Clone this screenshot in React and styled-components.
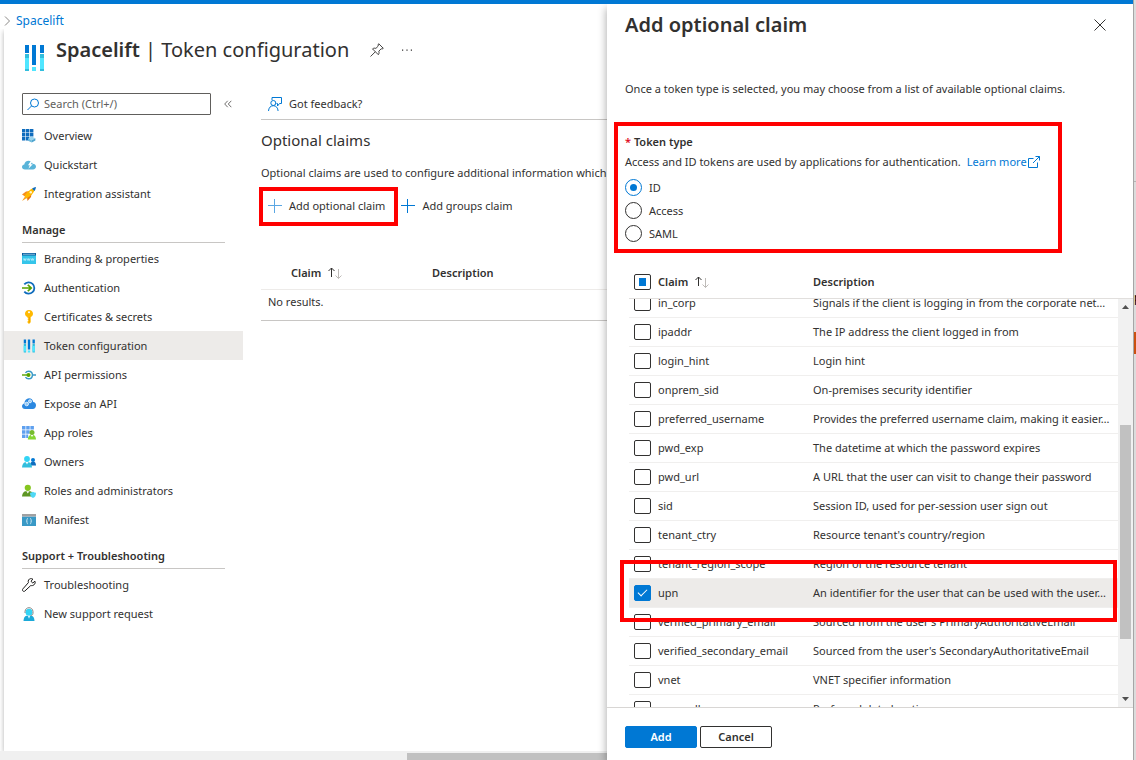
import React, { useLayoutEffect, useRef, useState } from "react";
import styled, { createGlobalStyle, css } from "styled-components";

const blue = "#0078d4";
const ink = "#323130";
const line = "#c8c6c4";
const faint = "#edebe9";
const alarm = "#ff0000";

const GlobalStyle = createGlobalStyle`
  *, *::before, *::after { box-sizing: border-box; }
  body {
    margin: 0;
    background: #fff;
    color: ${ink};
    font-family: "Noto Sans", "Open Sans", sans-serif;
    font-size: 11px;
    line-height: 16px;
    overflow: hidden;
  }
  h1, h2, h3, p, ul { margin: 0; padding: 0; }
  button, input { font: inherit; color: inherit; }
  a { color: ${blue}; text-decoration: none; }
  svg { display: block; flex: none; }
`;

const Desktop = styled.div`
  display: flex;
  height: 100vh;
`;

const Portal = styled.div`
  flex: 1;
  min-width: 0;
  display: flex;
  flex-direction: column;
`;

const TopBar = styled.div`
  height: 4px;
  flex: none;
  background: ${blue};
`;

const Stage = styled.div`
  flex: 1;
  min-height: 0;
  display: flex;
`;

const Main = styled.main`
  flex: 1;
  min-width: 0;
  display: flex;
  flex-direction: column;
  overflow: hidden;
`;

const Breadcrumb = styled.nav`
  height: 25px;
  flex: none;
  display: flex;
  align-items: center;
  gap: 6px;
  padding: 8px 0 0 4px;
  font-size: 12px;
`;

const Blade = styled.section`
  flex: 1;
  margin-left: 4px;
  background: #fff;
  box-shadow: 0 2px 5px rgba(0, 0, 0, 0.3);
  clip-path: inset(0 0 0 -4px);
`;

const BladeHeader = styled.header`
  display: flex;
  align-items: flex-start;
  gap: 10px;
  padding: 7px 18px 0;
  height: 64px;
`;

const BladeMark = styled.div`
  padding-top: 8px;
`;

const BladeTitle = styled.h1`
  font-size: 20px;
  line-height: 28px;
  font-weight: 400;
  white-space: nowrap;

  strong { font-weight: 600; }
`;

const TitleTools = styled.div`
  display: flex;
  align-items: center;
  gap: 16px;
  height: 28px;
  padding-left: 11px;
`;

const IconButton = styled.button`
  display: flex;
  align-items: center;
  justify-content: center;
  width: 14px;
  height: 14px;
  padding: 0;
  border: 0;
  background: none;
`;

const BladeBody = styled.div`
  display: flex;
`;

const Sidebar = styled.nav`
  width: 239px;
  flex: none;
`;

const SearchRow = styled.div`
  display: flex;
  align-items: center;
  gap: 10px;
  padding-left: 18px;
  margin-bottom: 6px;
`;

const SearchField = styled.label`
  display: flex;
  align-items: center;
  gap: 4px;
  width: 189px;
  height: 22px;
  padding: 0 4px;
  border: 1px solid #605e5c;
  border-radius: 1px;

  input {
    flex: 1;
    min-width: 0;
    padding: 0;
    border: 0;
    outline: 0;
    background: none;
  }
  input::placeholder { color: #605e5c; opacity: 1; }
`;

const MenuHeading = styled.h3`
  margin: 13px 18px 1px;
  padding-bottom: 3px;
  border-bottom: 1px solid ${line};
  font-size: 11px;
  line-height: 18px;
  font-weight: 600;
`;

const Menu = styled.ul`
  list-style: none;
`;

const MenuLink = styled.a`
  display: flex;
  align-items: center;
  gap: 8px;
  height: 29px;
  padding-left: 18px;
  color: ${ink};
  background: ${(p) => (p.$current ? faint : "transparent")};
`;

const Content = styled.div`
  flex: 1;
  min-width: 0;
  padding-left: 18px;
  white-space: nowrap;
`;

const CommandBar = styled.div`
  display: flex;
  height: 27px;
  padding-bottom: 4px;
  border-bottom: 1px solid ${line};
`;

const Command = styled.button`
  position: relative;
  display: flex;
  align-items: center;
  gap: 7px;
  padding: 0 7px;
  border: 0;
  background: none;
`;

const SectionTitle = styled.h2`
  padding-top: 10px;
  font-size: 15px;
  line-height: 20px;
  font-weight: 400;
`;

const Lead = styled.p`
  margin-top: 15px;
`;

const ClaimActions = styled.div`
  display: flex;
  gap: 2px;
  height: 32px;
  margin-top: 9px;
`;

const ButtonFrame = styled.span`
  position: absolute;
  inset: -3px -6px -4px -2px;
  border: 4px solid ${alarm};
  pointer-events: none;
`;

const SummaryTable = styled.table`
  width: 100%;
  margin-top: 34px;
  border-spacing: 0;
  table-layout: fixed;

  th {
    height: 34px;
    padding: 0 0 0 30px;
    border-bottom: 1px solid ${faint};
    text-align: left;
    font-weight: 600;
  }
  th:first-child { width: 171px; }
  th + th { padding-left: 0; }
  td {
    padding: 4px 7px 10px;
    border-bottom: 1px solid ${line};
  }
`;

const SortLabel = styled.span`
  display: flex;
  align-items: center;
  gap: 7px;
`;

const PageScroll = styled.div`
  height: 9px;
  flex: none;
  padding-top: 2px;
  background: #f0f0f0;
`;

const PageThumb = styled.div`
  width: 33%;
  height: 7px;
  margin-left: 67%;
  background: #c1c1c1;
`;

const Drawer = styled.aside`
  width: 526px;
  flex: none;
  display: flex;
  flex-direction: column;
  position: relative;
  background: #fff;
  box-shadow: -1px 4px 8px rgba(0, 0, 0, 0.3);
  clip-path: inset(0 0 0 -16px);
`;

const DrawerHeader = styled.header`
  display: flex;
  align-items: center;
  justify-content: space-between;
  padding: 7px 26px 0 18px;

  h2 {
    font-size: 20px;
    line-height: 28px;
    font-weight: 600;
  }
`;

const DrawerLead = styled.p`
  margin: 42px 18px 0;
`;

const TokenBox = styled.div`
  margin: 25px 71px 0 7px;
  padding: 8px 7px 4px;
  border: 4px solid ${alarm};

  fieldset {
    margin: 0;
    padding: 0;
    border: 0;
  }
  legend {
    padding: 0;
    font-weight: 600;
  }
`;

const Required = styled.span`
  color: #e00b1c;
`;

const Hint = styled.p`
  display: flex;
  align-items: center;
  margin: 4px 0 6px;

  a {
    display: flex;
    align-items: center;
    gap: 1px;
    margin-left: 6px;
  }
`;

const Choice = styled.label`
  display: flex;
  align-items: center;
  gap: 7px;
  height: 23px;
`;

const Radio = styled.input`
  appearance: none;
  display: flex;
  align-items: center;
  justify-content: center;
  width: 17px;
  height: 17px;
  margin: 0;
  border: 1px solid ${ink};
  border-radius: 50%;

  &:checked { border-color: ${blue}; }
  &:checked::after {
    content: "";
    width: 7px;
    height: 7px;
    border-radius: 50%;
    background: ${blue};
  }
`;

const ClaimArea = styled.div`
  flex: 1;
  min-height: 0;
  display: flex;
  margin-top: 13px;
`;

const ClaimScroller = styled.div`
  flex: 1;
  min-width: 0;
  padding-left: 22px;
  overflow-y: scroll;
  scrollbar-width: none;
`;

const ClaimTable = styled.table`
  width: 100%;
  border-spacing: 0;
  table-layout: fixed;
  white-space: nowrap;

  th, td {
    padding: 0;
    text-align: left;
  }
  th {
    position: sticky;
    top: 0;
    z-index: 1;
    height: 33px;
    background: #fff;
    border-bottom: 1px solid #e1dfdd;
    font-weight: 600;
  }
  td {
    height: 29px;
    border-bottom: 1px solid #f0efee;
  }
  th:first-child, td:first-child {
    width: 29px;
    padding-left: 5px;
  }
  th:nth-child(2) { width: 155px; }
`;

const ClaimRow = styled.tr`
  ${(p) =>
    p.$chosen &&
    css`
      position: relative;
      td { background: ${faint}; }
    `}
`;

const RowFrame = styled.span`
  position: absolute;
  inset: -19px 1px -14px -9px;
  border: 4px solid ${alarm};
  pointer-events: none;
`;

const Tick = styled.input`
  appearance: none;
  display: flex;
  align-items: center;
  justify-content: center;
  width: 17px;
  height: 16px;
  margin: 0;
  border: 1px solid ${ink};
  border-radius: 2px;
  background: #fff;

  &:indeterminate::after {
    content: "";
    width: 7px;
    height: 8px;
    background: ${blue};
  }
  &:checked {
    border-color: ${blue};
    background: ${blue};
  }
  &:checked::after {
    content: "";
    width: 9px;
    height: 5px;
    margin-bottom: 3px;
    border: solid #fff;
    border-width: 0 0 1px 1px;
    transform: rotate(-45deg);
  }
`;

const ScrollTrack = styled.div`
  display: flex;
  flex-direction: column;
  align-items: center;
  width: 15px;
  margin-top: 32px;
  padding: 6px 0;
  border-top: 1px solid #e1dfdd;
  background: #f1f1f1;
`;

const ScrollSpan = styled.div`
  flex: 1;
  display: flex;
  flex-direction: column;
  justify-content: flex-end;
  width: 11px;
  padding-bottom: 58px;
`;

const ScrollThumb = styled.div`
  height: 65%;
  background: #c1c1c1;
`;

const DrawerFooter = styled.footer`
  display: flex;
  gap: 3px;
  padding: 18px 18px 12px;
  border-top: 1px solid #d8d6d4;
`;

const ActionButton = styled.button`
  width: 72px;
  height: 22px;
  padding: 0;
  border: 1px solid ${(p) => (p.$primary ? blue : ink)};
  border-radius: 2px;
  background: ${(p) => (p.$primary ? blue : "#fff")};
  color: ${(p) => (p.$primary ? "#fff" : ink)};
  font-weight: 600;
  line-height: 18px;
`;

const Neighbour = styled.div`
  width: 3px;
  flex: none;
  overflow: hidden;
  padding-top: 181px;
  border-left: 1px solid #a6a6a6;
  background: #dcdcdc;
`;

const NeighbourPage = styled.div`
  height: 100%;
  padding-top: 108px;
  border-top: 1px solid #b4b4b4;
  color: #000;
  font-size: 12px;
  line-height: 16px;
`;

const NeighbourBadge = styled.div`
  height: 22px;
  margin-top: 26px;
  background: #ca5010;
`;

function TokenIcon({ width = 14, height = 14 }) {
  return (
    <svg width={width} height={height} viewBox="0 0 24 28" preserveAspectRatio="none" aria-hidden="true">
      <path fill={blue} d="M3 1h4v8H3zM10 1h4v20h-4zM18 1h4v8h-4z" />
      <path fill="#32bedd" d="M3 10h4v17H3zM18 10h4v17h-4z" />
      <path fill="#50e6ff" d="M3 14h4v11H3zM18 14h4v11h-4zM10 23h4v4h-4z" />
    </svg>
  );
}

function Drawing({ children, size = 14 }) {
  return (
    <svg width={size} height={size} viewBox="0 0 14 14" fill="none" aria-hidden="true">
      {children}
    </svg>
  );
}

const OverviewIcon = () => (
  <Drawing>
    <path fill="#0f6cbd" d="M0 0h3.4v3.4H0zM4 0h3.4v3.4H4zM8 0h3.4v3.4H8zM0 4h3.4v3.4H0zM4 4h3.4v3.4H4zM8 4h3.4v3.4H8zM0 8h3.4v3.4H0zM4 8h3.4v3.4H4z" />
    <path fill="#9ad4ee" d="M6 9.4 9.6 7.4 13.4 9.2 9.8 11.2z" />
    <path fill="#6bb9dc" d="M6 9.4 9.8 11.2v2.4L6 11.8z" />
    <path fill="#4fa5cf" d="M13.4 9.2v2.4l-3.6 2v-2.4z" />
  </Drawing>
);
const QuickstartIcon = () => (
  <Drawing>
    <path fill="#59b4d9" d="M3 11.5C1.200 11.500 0 10.400 0 9c0-1.400 1.100-2.400 2.300-2.500C2.600 4.200 4.300 2.800 6.600 2.800c2 0 3.500 1.200 4 2.900 2 0 3.400 1.200 3.400 2.900s-1.300 2.900-3 2.900z" />
    <path fill="#fff" d="M8.800 3 6 7.300h1.800L6.400 10.800 10.800 6.200H8.600L11 3z" />
  </Drawing>
);
const RocketIcon = () => (
  <Drawing>
    <path fill="#f78d1e" d="M0 7.500 4 4.500l4-.5L4 10z" />
    <path fill="#e8740c" d="M9.600 6 9 10l-3.500 4-.5-4z" />
    <path fill="#ffb900" d="M2.500 9C5 5 8 2 12 1l1 1c-1 4-4 7-8.500 9.500z" />
    <path fill="#f9a11b" d="M3 9.500 0 14l4.800-3z" />
    <path fill="#0f6cbd" d="M10 1.700C11.300.8 12.600.2 14 0c-.2 1.500-.6 2.600-1.500 4z" />
    <circle cx="8.800" cy="5.200" r="1.200" fill="#fff3cf" />
  </Drawing>
);
const BrandingIcon = () => (
  <Drawing>
    <path fill="#35c5ea" d="M0 3h14v9H0z" />
    <path fill="#0b5a9d" d="M0 1h14v2.500H0z" />
    <path fill="#9fd3ea" d="M1 1.800h12v.8H1z" />
    <path stroke="#c9f3fd" strokeWidth=".7" d="m1.500 6.500.7 2 .7-2 .7 2 .7-2m1 0 .7 2 .7-2 .7 2 .7-2m1 0 .7 2 .7-2 .7 2 .7-2" />
  </Drawing>
);
const AuthIcon = () => (
  <Drawing>
    <path stroke="#0f6cbd" strokeWidth="1.800" d="M2.300 3.300A5.700 5.700 0 1 1 2.300 10.700" />
    <path stroke="#57a300" strokeWidth="1.700" d="M0 7h8.500M5.800 3.800 9.200 7l-3.400 3.200" />
  </Drawing>
);
const KeyIcon = () => (
  <Drawing>
    <path fill="#ffb900" d="M7 0c2.300 0 4 1.600 4 3.700 0 1.500-.9 2.700-2.300 3.300v5.300L7 14l-1.500-1.400v-1.200l1-.8-1-.9.9-.9-.9-.9V7C4 6.400 3 5.200 3 3.700 3 1.600 4.700 0 7 0z" />
    <circle cx="7" cy="2.200" r="1" fill="#fff" />
    <path fill="#e59400" d="M7.300 7h.6v5.500h-.6z" />
  </Drawing>
);
const PermissionIcon = () => (
  <Drawing>
    <path stroke="#3999c6" strokeWidth="1.400" d="M3.500 5C4.200 3.700 5.400 3.200 6.600 3.200 8.800 3.200 10.400 4.900 10.400 7s-1.600 3.800-3.800 3.800C5.400 10.800 4.200 10.300 3.500 9M10.500 7H14" />
    <path stroke="#57a300" strokeWidth="1.400" d="M0 7h5" />
    <circle cx="6.500" cy="7" r="2" fill="#57a300" />
  </Drawing>
);
const ExposeIcon = () => (
  <Drawing>
    <path fill="#2b88e0" d="M3 12C1.200 12 0 10.800 0 9.200c0-1.500 1-2.600 2.400-2.800C2.600 3.400 4.400 1.200 7 1.200c2.300 0 3.900 1.600 4.200 3.800C12.900 5.200 14 6.500 14 8.300 14 10.400 12.600 12 10.800 12z" />
    <circle cx="4.700" cy="7" r="1.800" fill="#8fc7f6" stroke="#e6f3fd" strokeWidth=".9" />
    <circle cx="8" cy="4.300" r="1.500" fill="#8fc7f6" stroke="#e6f3fd" strokeWidth=".9" />
  </Drawing>
);
const AppRolesIcon = () => (
  <Drawing>
    <path fill="#5ea0ef" d="M0 0h3.500v3.500H0zM4.200 0h3.500v3.500H4.200zM8.400 0h3.500v3.500H8.400zM0 4.200h3.500v3.500H0zM4.200 4.200h3.500v3.500H4.200zM0 8.400h3.500v3.500H0zM4.200 8.400h2v3.500h-2z" />
    <path fill="#86d633" d="M5.800 13.500c.2-2.500 1.200-4.300 2.800-4.600h2.800c1.600.3 2.500 2.100 2.600 4.600z" />
    <circle cx="10" cy="6.600" r="2.500" fill="#76bc2d" />
    <path fill="#fff" d="m8.800 9 1.200 2 1.200-2z" />
  </Drawing>
);
const OwnersIcon = () => (
  <Drawing>
    <path fill="#0f6cbd" d="M8 10.500c.2-2.300 1-3.600 2.300-3.800h1.500c1.300.2 2.100 1.500 2.200 3.800z" />
    <circle cx="11" cy="5" r="2" fill="#0078d4" />
    <path fill="#32bedd" d="M0 12.500c.2-3 1.300-5 3-5.300h4c1.700.3 2.800 2.300 3 5.300z" />
    <circle cx="5" cy="4" r="2.900" fill="#32d4f5" />
    <path fill="#fff" d="m3.700 7.100 1.300 2.300 1.300-2.300z" />
  </Drawing>
);
const RolesIcon = () => (
  <Drawing>
    <path fill="#5e9624" d="M0 12.600c.2-3 1.500-5 3.300-5.300h5c1.700.3 2.700 2.300 2.800 5.300z" />
    <circle cx="5.800" cy="3.800" r="3.100" fill="#86c61f" />
    <path fill="#fff" d="m4.400 7.200 1.400 2.400 1.400-2.400z" />
    <path fill="#50d8f5" d="M8 8.700c1 0 2-.3 2.900-.9.900.6 1.900.9 3.100.9 0 3-1 4.400-3 5.300-2-.9-3-2.300-3-5.300z" />
  </Drawing>
);
const ManifestIcon = () => (
  <Drawing>
    <path fill="#3999c6" d="M0 3.500h14V13H0z" />
    <path fill="#a0a1a2" d="M0 1h14v2.500H0z" />
    <path stroke="#d6ebf5" strokeWidth=".9" d="M6 5.500c-1 0-1 .5-1 1.300 0 .9 0 1.200-.8 1.200.8 0 .8.4.8 1.300s0 1.400 1 1.400M8 5.500c1 0 1 .5 1 1.300C9 7.700 9 8 9.800 8 9 8 9 8.400 9 9.300s0 1.400-1 1.400" />
  </Drawing>
);
const WrenchIcon = () => (
  <Drawing>
    <path stroke="#1b1a19" strokeLinejoin="round" d="M12.900 3.200 10.800 5 9 3.300 10.800 1.100C9.200.2 7.400.6 6.600 1.900c-.5.9-.5 1.800-.2 2.700L.9 10.900c-.6.7-.5 1.500 0 2.100.6.6 1.400.6 2 0l5.900-5.500c1.100.3 2.300.1 3.200-.7 1.100-1 1.500-2.400.9-3.600z" />
  </Drawing>
);
const SupportIcon = () => (
  <Drawing>
    <path fill="#1ba9d8" d="M1.500 14c.1-3.200 1.300-5 3-5.300h5c1.700.3 2.900 2.100 3 5.300z" />
    <circle cx="7" cy="5.200" r="3.500" fill="#32d4f5" />
    <path stroke="#8a8886" d="M3 6V4.500C3.200 2 5 .7 7 .7s3.800 1.300 4 3.800v1.800c-.2 1.500-1 2.200-2.500 2.300" />
    <path fill="#d8f6fd" d="m5.700 8.700 1.300 3 1.300-3z" />
  </Drawing>
);

const mainMenu = [
  ["Overview", OverviewIcon],
  ["Quickstart", QuickstartIcon],
  ["Integration assistant", RocketIcon],
];
const manageMenu = [
  ["Branding & properties", BrandingIcon],
  ["Authentication", AuthIcon],
  ["Certificates & secrets", KeyIcon],
  ["Token configuration", TokenIcon],
  ["API permissions", PermissionIcon],
  ["Expose an API", ExposeIcon],
  ["App roles", AppRolesIcon],
  ["Owners", OwnersIcon],
  ["Roles and administrators", RolesIcon],
  ["Manifest", ManifestIcon],
];
const supportMenu = [
  ["Troubleshooting", WrenchIcon],
  ["New support request", SupportIcon],
];

const claims = [
  ["in_corp", "Signals if the client is logging in from the corporate net…"],
  ["ipaddr", "The IP address the client logged in from"],
  ["login_hint", "Login hint"],
  ["onprem_sid", "On-premises security identifier"],
  ["preferred_username", "Provides the preferred username claim, making it easier…"],
  ["pwd_exp", "The datetime at which the password expires"],
  ["pwd_url", "A URL that the user can visit to change their password"],
  ["sid", "Session ID, used for per-session user sign out"],
  ["tenant_ctry", "Resource tenant's country/region"],
  ["tenant_region_scope", "Region of the resource tenant"],
  ["upn", "An identifier for the user that can be used with the user…"],
  ["verified_primary_email", "Sourced from the user's PrimaryAuthoritativeEmail"],
  ["verified_secondary_email", "Sourced from the user's SecondaryAuthoritativeEmail"],
  ["vnet", "VNET specifier information"],
  ["xms_pdl", "Preferred data location"],
];

function MenuList({ items }) {
  return (
    <Menu>
      {items.map(([label, Icon]) => {
        const current = label === "Token configuration";
        return (
          <li key={label}>
            <MenuLink href="#" $current={current} aria-current={current ? "page" : undefined}>
              <Icon />
              {label}
            </MenuLink>
          </li>
        );
      })}
    </Menu>
  );
}

function SortArrows() {
  return (
    <svg width="14" height="12" viewBox="0 0 14 12" fill="none" aria-hidden="true">
      <path stroke={ink} d="M3.500 10V1M.500 4l3-3 3 3" />
      <path stroke="#bebbb8" d="M10.500 2v9.500M7.500 8.500l3 3 3-3" />
    </svg>
  );
}

function PlusIcon({ color = blue }) {
  return (
    <Drawing>
      <path stroke={color} d="M6.500 0v14M0 6.500h14" />
    </Drawing>
  );
}

function ClaimPicker() {
  const scroller = useRef(null);
  const all = useRef(null);
  const [picked, setPicked] = useState(["upn"]);

  useLayoutEffect(() => {
    scroller.current.scrollTop = 10;
  }, []);
  useLayoutEffect(() => {
    all.current.indeterminate = picked.length > 0 && picked.length < claims.length;
  }, [picked]);

  const toggle = (name) =>
    setPicked((now) => (now.includes(name) ? now.filter((n) => n !== name) : [...now, name]));

  return (
    <ClaimArea>
      <ClaimScroller ref={scroller}>
        <ClaimTable>
          <thead>
            <tr>
              <th>
                <Tick
                  ref={all}
                  type="checkbox"
                  aria-label="Select all claims"
                  checked={picked.length === claims.length}
                  onChange={(e) => setPicked(e.target.checked ? claims.map((c) => c[0]) : [])}
                />
              </th>
              <th>
                <SortLabel>
                  Claim <SortArrows />
                </SortLabel>
              </th>
              <th>Description</th>
            </tr>
          </thead>
          <tbody>
            {claims.map(([name, description]) => {
              const chosen = picked.includes(name);
              return (
                <ClaimRow key={name} $chosen={chosen}>
                  <td>
                    <Tick
                      type="checkbox"
                      id={`claim-${name}`}
                      checked={chosen}
                      onChange={() => toggle(name)}
                    />
                    {name === "upn" && chosen && <RowFrame aria-hidden="true" />}
                  </td>
                  <td>
                    <label htmlFor={`claim-${name}`}>{name}</label>
                  </td>
                  <td>{description}</td>
                </ClaimRow>
              );
            })}
          </tbody>
        </ClaimTable>
      </ClaimScroller>
      <ScrollTrack aria-hidden="true">
        <svg width="7" height="4" viewBox="0 0 7 4">
          <path fill="#505050" d="M0 4 3.500 0 7 4z" />
        </svg>
        <ScrollSpan>
          <ScrollThumb />
        </ScrollSpan>
        <svg width="7" height="4" viewBox="0 0 7 4">
          <path fill="#505050" d="M0 0h7L3.500 4z" />
        </svg>
      </ScrollTrack>
    </ClaimArea>
  );
}

export default function App() {
  const [tokenType, setTokenType] = useState("ID");
  return (
    <>
      <GlobalStyle />
      <Desktop>
        <Portal>
          <TopBar />
          <Stage>
            <Main>
              <Breadcrumb aria-label="Breadcrumb">
                <svg width="6" height="10" viewBox="0 0 6 10" fill="none" aria-hidden="true">
                  <path stroke="#8a8886" d="m1 .500 4.500 4.500L1 9.500" />
                </svg>
                <a href="#">Spacelift</a>
              </Breadcrumb>
              <Blade>
                <BladeHeader>
                  <BladeMark>
                    <TokenIcon width={24} height={28} />
                  </BladeMark>
                  <BladeTitle>
                    <strong>Spacelift</strong> | Token configuration
                  </BladeTitle>
                  <TitleTools>
                    <IconButton aria-label="Pin">
                      <svg width="14" height="14" viewBox="0 0 14 14" fill="none" aria-hidden="true">
                        <path
                          stroke={ink}
                          strokeWidth=".9"
                          d="m8.700.7 4.600 4.600-1.200.7-.9-.2-2.400 2.400c.5 1.400.3 2.600-.5 3.500L2.500 5.900c1-.8 2.100-1 3.400-.5l2.400-2.400-.3-1zM5.300 8.800.5 13.500"
                        />
                      </svg>
                    </IconButton>
                    <IconButton aria-label="More">
                      <svg width="12" height="2" viewBox="0 0 12 2" aria-hidden="true">
                        <path fill={ink} d="M1 .500h1.200v1.200H1zM5.400.5h1.200v1.200H5.400zM9.800.5H11v1.200H9.800z" />
                      </svg>
                    </IconButton>
                  </TitleTools>
                </BladeHeader>
                <BladeBody>
                  <Sidebar aria-label="Application">
                    <SearchRow>
                      <SearchField>
                        <svg width="13" height="13" viewBox="0 0 13 13" fill="none" aria-hidden="true">
                          <circle cx="7.500" cy="5" r="4" stroke={blue} />
                          <path stroke={blue} d="M4.600 7.900.5 12" />
                        </svg>
                        <input type="search" placeholder="Search (Ctrl+/)" aria-label="Search" />
                      </SearchField>
                      <IconButton aria-label="Collapse menu">
                        <svg width="8" height="8" viewBox="0 0 8 8" fill="none" aria-hidden="true">
                          <path stroke="#605e5c" strokeWidth=".9" d="M3.700.8.7 4l3 3.200M7.300.8l-3 3.200 3 3.200" />
                        </svg>
                      </IconButton>
                    </SearchRow>
                    <MenuList items={mainMenu} />
                    <MenuHeading>Manage</MenuHeading>
                    <MenuList items={manageMenu} />
                    <MenuHeading>Support + Troubleshooting</MenuHeading>
                    <MenuList items={supportMenu} />
                  </Sidebar>
                  <Content>
                    <CommandBar>
                      <Command>
                        <Drawing>
                          <path stroke={blue} d="M4 3V.5h9.500v6h-2L9.500 9V6.500h-1" />
                          <circle cx="5.300" cy="6" r="2.500" stroke={blue} />
                          <path stroke={blue} d="M.5 14c.2-3.200 2-5.300 4.800-5.300s4.600 2.100 4.800 5.300" />
                        </Drawing>
                        Got feedback?
                      </Command>
                    </CommandBar>
                    <SectionTitle>Optional claims</SectionTitle>
                    <Lead>Optional claims are used to configure additional information which</Lead>
                    <ClaimActions>
                      <Command>
                        <PlusIcon color="#5ba7e3" />
                        Add optional claim
                        <ButtonFrame aria-hidden="true" />
                      </Command>
                      <Command>
                        <PlusIcon />
                        Add groups claim
                      </Command>
                    </ClaimActions>
                    <SummaryTable>
                      <thead>
                        <tr>
                          <th>
                            <SortLabel>
                              Claim <SortArrows />
                            </SortLabel>
                          </th>
                          <th>Description</th>
                        </tr>
                      </thead>
                      <tbody>
                        <tr>
                          <td colSpan={2}>No results.</td>
                        </tr>
                      </tbody>
                    </SummaryTable>
                  </Content>
                </BladeBody>
              </Blade>
              <PageScroll aria-hidden="true">
                <PageThumb />
              </PageScroll>
            </Main>
            <Drawer>
              <DrawerHeader>
                <h2>Add optional claim</h2>
                <IconButton aria-label="Close">
                  <svg width="12" height="12" viewBox="0 0 12 12" fill="none" aria-hidden="true">
                    <path stroke={ink} d="m.5.5 11 11m0-11-11 11" />
                  </svg>
                </IconButton>
              </DrawerHeader>
              <DrawerLead>
                Once a token type is selected, you may choose from a list of available optional claims.
              </DrawerLead>
              <TokenBox>
                <fieldset>
                  <legend>
                    <Required>*</Required> Token type
                  </legend>
                  <Hint>
                    Access and ID tokens are used by applications for authentication.
                    <a href="#">
                      Learn more
                      <svg width="12" height="12" viewBox="0 0 12 12" fill="none" aria-hidden="true">
                        <path stroke={blue} d="M5.500 2.500h-5v9h9v-5M7.500.5h4v4M11.500.5 5 7" />
                      </svg>
                    </a>
                  </Hint>
                  {["ID", "Access", "SAML"].map((type) => (
                    <Choice key={type}>
                      <Radio
                        type="radio"
                        name="token-type"
                        checked={tokenType === type}
                        onChange={() => setTokenType(type)}
                      />
                      {type}
                    </Choice>
                  ))}
                </fieldset>
              </TokenBox>
              <ClaimPicker />
              <DrawerFooter>
                <ActionButton $primary>Add</ActionButton>
                <ActionButton>Cancel</ActionButton>
              </DrawerFooter>
            </Drawer>
          </Stage>
        </Portal>
        <Neighbour aria-hidden="true">
          <NeighbourPage>
            p
            <NeighbourBadge />
          </NeighbourPage>
        </Neighbour>
      </Desktop>
    </>
  );
}
